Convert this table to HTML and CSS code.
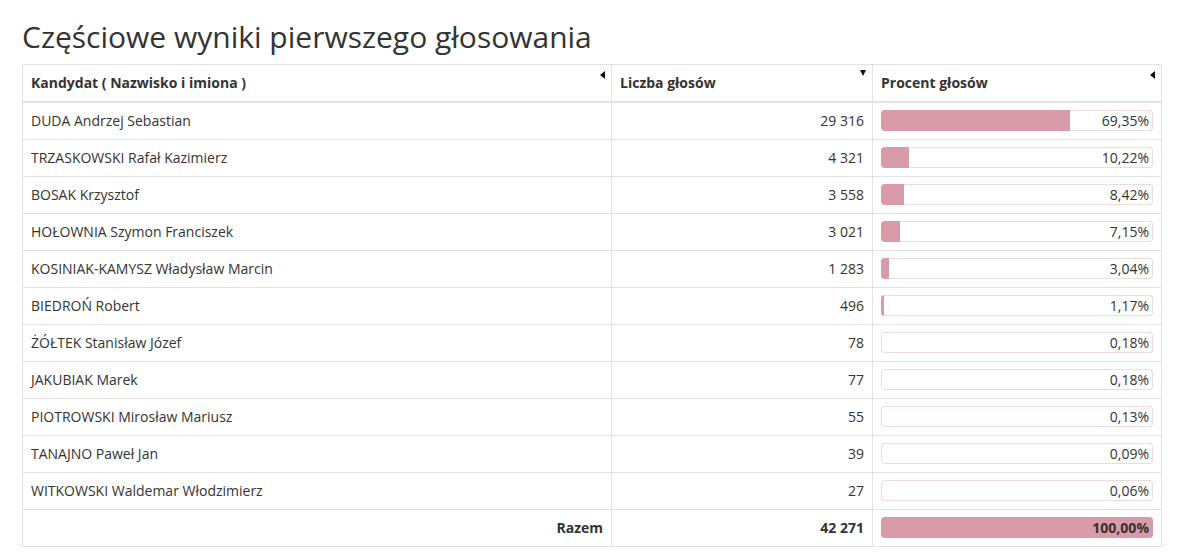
FILE: index.html
```html
<!DOCTYPE html>
<html lang="pl">
<head>
<meta charset="utf-8">
<title>Częściowe wyniki pierwszego głosowania</title>
<link rel="stylesheet" href="styles.css">
</head>
<body>
<div class="page">
  <h1 class="title">Częściowe wyniki pierwszego głosowania</h1>
  <table class="results">
    <colgroup>
      <col class="c-name">
      <col class="c-votes">
      <col class="c-pct">
    </colgroup>
    <thead>
      <tr>
        <th class="sortable">Kandydat ( Nazwisko i imiona )<span class="sort sort-left"></span></th>
        <th class="sortable">Liczba głosów<span class="sort sort-down"></span></th>
        <th class="sortable">Procent głosów<span class="sort sort-left"></span></th>
      </tr>
    </thead>
    <tbody>
      <tr><td>DUDA Andrzej Sebastian</td><td class="num">29 316</td><td><div class="bar"><div class="fill" style="width:69.35%"></div><span class="pct">69,35%</span></div></td></tr>
      <tr><td>TRZASKOWSKI Rafał Kazimierz</td><td class="num">4 321</td><td><div class="bar"><div class="fill" style="width:10.22%"></div><span class="pct">10,22%</span></div></td></tr>
      <tr><td>BOSAK Krzysztof</td><td class="num">3 558</td><td><div class="bar"><div class="fill" style="width:8.42%"></div><span class="pct">8,42%</span></div></td></tr>
      <tr><td>HOŁOWNIA Szymon Franciszek</td><td class="num">3 021</td><td><div class="bar"><div class="fill" style="width:7.15%"></div><span class="pct">7,15%</span></div></td></tr>
      <tr><td>KOSINIAK-KAMYSZ Władysław Marcin</td><td class="num">1 283</td><td><div class="bar"><div class="fill" style="width:3.04%"></div><span class="pct">3,04%</span></div></td></tr>
      <tr><td>BIEDROŃ Robert</td><td class="num">496</td><td><div class="bar"><div class="fill" style="width:1.17%"></div><span class="pct">1,17%</span></div></td></tr>
      <tr><td>ŻÓŁTEK Stanisław Józef</td><td class="num">78</td><td><div class="bar"><div class="fill" style="width:0px"></div><span class="pct">0,18%</span></div></td></tr>
      <tr><td>JAKUBIAK Marek</td><td class="num">77</td><td><div class="bar"><div class="fill" style="width:0px"></div><span class="pct">0,18%</span></div></td></tr>
      <tr><td>PIOTROWSKI Mirosław Mariusz</td><td class="num">55</td><td><div class="bar"><div class="fill" style="width:0px"></div><span class="pct">0,13%</span></div></td></tr>
      <tr><td>TANAJNO Paweł Jan</td><td class="num">39</td><td><div class="bar"><div class="fill" style="width:0px"></div><span class="pct">0,09%</span></div></td></tr>
      <tr><td>WITKOWSKI Waldemar Włodzimierz</td><td class="num">27</td><td><div class="bar"><div class="fill" style="width:0px"></div><span class="pct">0,06%</span></div></td></tr>
    </tbody>
    <tfoot>
      <tr class="total"><td class="num">Razem</td><td class="num">42 271</td><td><div class="bar"><div class="fill" style="width:100%"></div><span class="pct">100,00%</span></div></td></tr>
    </tfoot>
  </table>
</div>
</body>
</html>
```

FILE: styles.css
```css
html, body {
  margin: 0;
  padding: 0;
  background: #fff;
}

body {
  font-family: "Open Sans", "Liberation Sans", sans-serif;
  font-size: 14px;
  line-height: 20px;
  color: #333;
}

.page {
  padding: 20px 26px 0 22px;
}

.title {
  margin: 0 0 11px;
  font-size: 30px;
  line-height: 33px;
  font-weight: 400;
  color: #333;
}

.results {
  width: 1139px;
  border-collapse: collapse;
  border-spacing: 0;
  table-layout: fixed;
}

.c-name { width: 589px; }
.c-votes { width: 261px; }
.c-pct { width: 289px; }

.results th,
.results td {
  border: 1px solid #e3e3e3;
  padding: 8px;
  line-height: 20px;
  vertical-align: middle;
  text-align: left;
}

.results thead th {
  font-weight: 700;
  border-bottom: 2px solid #e3e3e3;
}

.sortable {
  position: relative;
}

.sort {
  position: absolute;
  right: 6px;
  width: 0;
  height: 0;
}

.sort-left {
  top: 6px;
  border-top: 4px solid transparent;
  border-bottom: 4px solid transparent;
  border-right: 5px solid #111;
}

.sort-down {
  top: 5px;
  border-left: 3.5px solid transparent;
  border-right: 3.5px solid transparent;
  border-top: 6px solid #111;
}

.num {
  text-align: right !important;
}

.total td {
  font-weight: 700;
}

.bar {
  position: relative;
  height: 21px;
  margin: -1px 0 0;
  border-radius: 4px;
  background: #fff;
  box-shadow: inset 0 0 0 1px #f1d9e0;
  overflow: hidden;
}

.fill {
  height: 100%;
  background: #d99ba9;
}

.pct {
  position: absolute;
  top: 0;
  right: 4px;
  line-height: 21px;
}
```
